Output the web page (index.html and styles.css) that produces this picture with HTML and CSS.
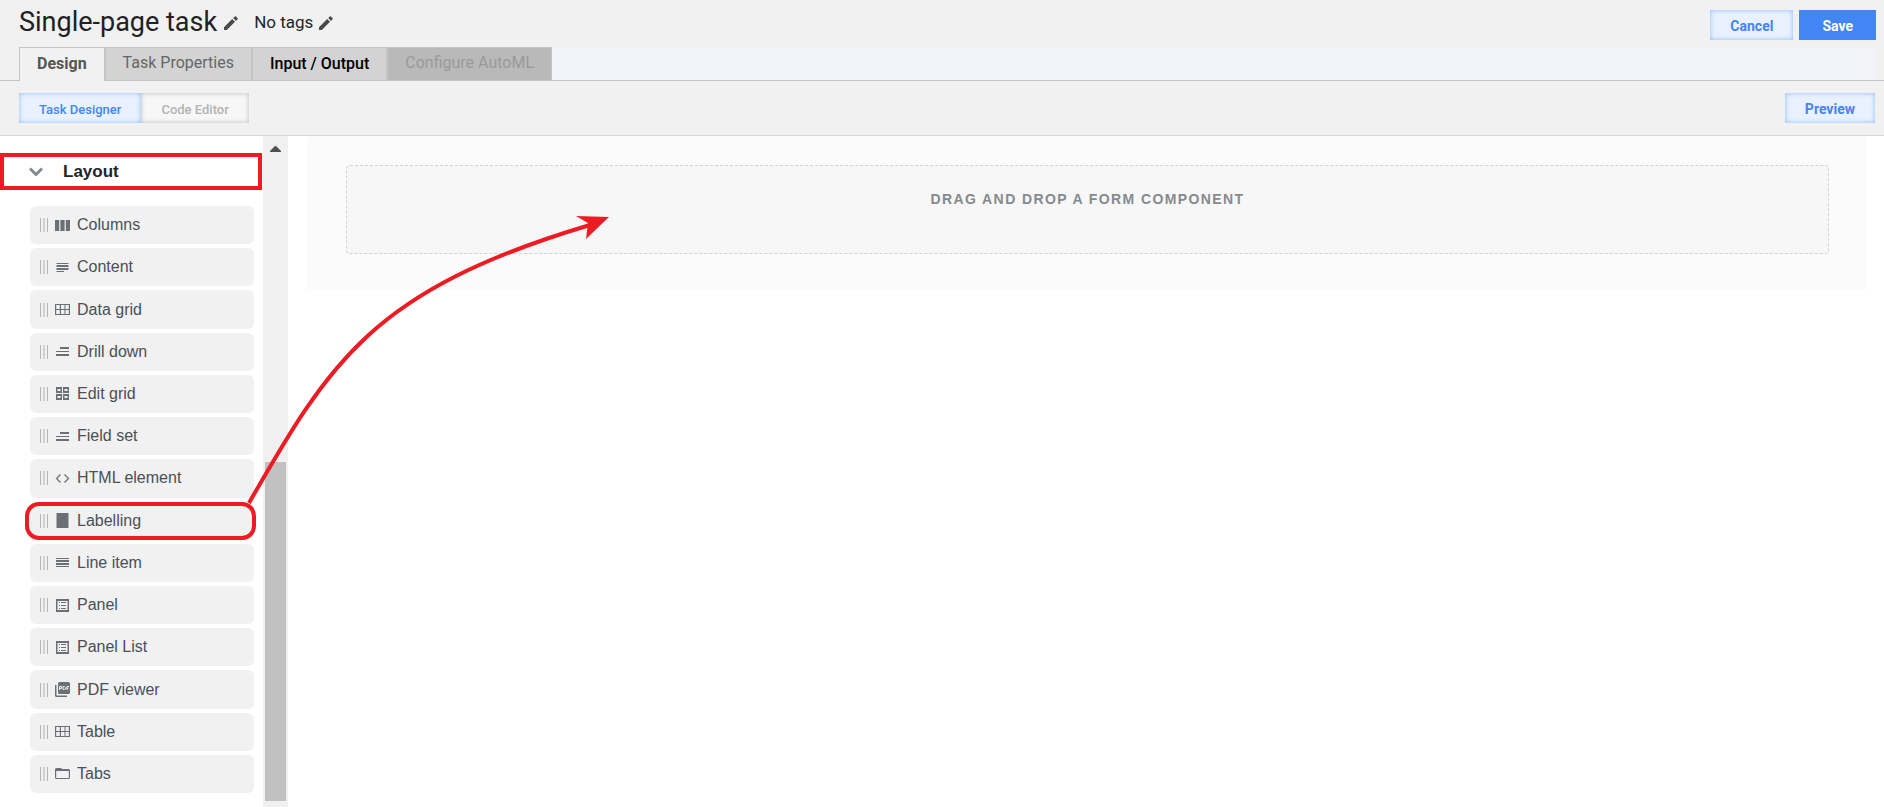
FILE: index.html
```
<!DOCTYPE html>
<html lang="en">
<head>
<meta charset="utf-8">
<title>Single-page task</title>
<link rel="stylesheet" href="styles.css">
</head>
<body>
<svg class="defs" aria-hidden="true">
  <symbol id="pencil" viewBox="0 0 14 14"><path d="M0 14V11.2L8.2 3l2.8 2.8L2.8 14zM9.2 2.1 10.8.5Q11.4 0 12 .5L13.5 2q.5.6 0 1.200L12 4.900z"/></symbol>
  <symbol id="handle" viewBox="0 0 8 14"><path class="thin" d="M0 0h1v14h-1zM7 0h1v14h-1z"/><path class="soft" d="M3 0h2v14h-2z"/></symbol>
  <symbol id="columns" viewBox="0 0 15 15"><path d="M0 2h4.200v11h-4.200zM5.400 2h4.200v11h-4.200zM10.800 2h4.200v11h-4.200z"/></symbol>
  <symbol id="content" viewBox="0 0 15 15"><path d="M1.500 3h12v1h-12zM1.500 5h12v2h-12zM1.500 8h12v2h-12zM1.500 11h7.500v1h-7.500z"/></symbol>
  <symbol id="grid" viewBox="0 0 15 15"><path fill-rule="evenodd" d="M0 2h15v11h-15zM1.200 3v4h3.600v-4zM6 3v4h3.500v-4zM10.500 3v4h3.300v-4zM1.200 8v4h3.600v-4zM6 8v4h3.500v-4zM10.500 8v4h3.300v-4z"/></symbol>
  <symbol id="drill" viewBox="0 0 15 15"><path d="M5 3h9v2h-9zM1 7h13v1h-13zM1 10h13v2h-13z"/></symbol>
  <symbol id="tiles" viewBox="0 0 15 15"><path fill-rule="evenodd" d="M1 1h6v6h-6zM2.500 3v2h3v-2zM8 1h6v6h-6zM9.500 3v2h3v-2zM1 8h6v6h-6zM2.500 10v2h3v-2zM8 8h6v6h-6zM9.500 10v2h3v-2z"/></symbol>
  <symbol id="code" viewBox="0 0 15 15"><path class="stroke" d="M5.500 3.500 1.500 7.500l4 4M9.500 3.500l4 4-4 4"/></symbol>
  <symbol id="block" viewBox="0 0 15 15"><path d="M1.500 0h12v15h-12z"/></symbol>
  <symbol id="lines" viewBox="0 0 15 15"><path d="M1 3h13v1h-13zM1 5h13v2h-13zM1 8h13v2h-13zM1 11h13v1h-13z"/></symbol>
  <symbol id="panel" viewBox="0 0 15 15"><path fill-rule="evenodd" d="M1 1h13v13h-13zM2.500 3v9h10v-9z"/><path d="M4 4h1v1h-1zM6 4h5v1h-5zM4 7h1v1h-1zM6 7h5v1h-5zM4 10h1v1h-1zM6 10h5v1h-5z"/></symbol>
  <symbol id="pdf" viewBox="0 0 15 15"><path d="M0 3h1.500v10.500h10.500v1.500h-10.500q-1.500 0-1.500-1.500z"/><rect x="3" width="12" height="12" rx="1.500"/><path class="cut" d="M4.500 8V4.500h2v2h-2M8 4.500h1.500l1 1v1.500l-1 .5h-1.500zM12 8V4.500h2M12 6.200h1.500"/></symbol>
  <symbol id="folder" viewBox="0 0 15 15"><path fill-rule="evenodd" d="M0 3.500q0-1.500 1.500-1.500h4.500l1.200 1h6.300q1.500 0 1.500 1.500v7q0 1.500-1.500 1.500h-12q-1.500 0-1.500-1.500zM1.200 5v7h12.600v-7z"/></symbol>
</svg>

<header class="header">
  <div class="title-row">
    <h1 class="title">Single-page task</h1>
    <button class="icon-button" aria-label="Edit title"><svg class="pencil"><use href="#pencil"/></svg></button>
    <span class="tags">No tags</span>
    <button class="icon-button" aria-label="Edit tags"><svg class="pencil"><use href="#pencil"/></svg></button>
    <div class="actions">
      <button class="btn btn-outline">Cancel</button>
      <button class="btn btn-primary">Save</button>
    </div>
  </div>
  <nav class="tabs">
    <div class="tabs-inner">
      <button class="tab tab-active">Design</button>
      <button class="tab">Task Properties</button>
      <button class="tab tab-strong">Input / Output</button>
      <button class="tab tab-disabled" disabled>Configure AutoML</button>
    </div>
  </nav>
  <div class="toolbar">
    <div class="switch">
      <button class="btn btn-small btn-outline">Task Designer</button>
      <button class="btn btn-small btn-muted">Code Editor</button>
    </div>
    <button class="btn btn-outline">Preview</button>
  </div>
</header>

<div class="workspace">
  <aside class="sidebar">
    <button class="group" aria-expanded="true">
      <svg class="chevron" viewBox="0 0 14 9"><path d="M1 1.500l6 6 6-6"/></svg>
      Layout
    </button>
    <ul class="components">
      <li><button class="item"><svg class="handle"><use href="#handle"/></svg><svg class="icon"><use href="#columns"/></svg>Columns</button></li>
      <li><button class="item"><svg class="handle"><use href="#handle"/></svg><svg class="icon"><use href="#content"/></svg>Content</button></li>
      <li><button class="item"><svg class="handle"><use href="#handle"/></svg><svg class="icon"><use href="#grid"/></svg>Data grid</button></li>
      <li><button class="item"><svg class="handle"><use href="#handle"/></svg><svg class="icon"><use href="#drill"/></svg>Drill down</button></li>
      <li><button class="item"><svg class="handle"><use href="#handle"/></svg><svg class="icon"><use href="#tiles"/></svg>Edit grid</button></li>
      <li><button class="item"><svg class="handle"><use href="#handle"/></svg><svg class="icon"><use href="#drill"/></svg>Field set</button></li>
      <li><button class="item"><svg class="handle"><use href="#handle"/></svg><svg class="icon"><use href="#code"/></svg>HTML element</button></li>
      <li><button class="item item-marked"><svg class="handle"><use href="#handle"/></svg><svg class="icon"><use href="#block"/></svg>Labelling</button></li>
      <li><button class="item"><svg class="handle"><use href="#handle"/></svg><svg class="icon"><use href="#lines"/></svg>Line item</button></li>
      <li><button class="item"><svg class="handle"><use href="#handle"/></svg><svg class="icon"><use href="#panel"/></svg>Panel</button></li>
      <li><button class="item"><svg class="handle"><use href="#handle"/></svg><svg class="icon"><use href="#panel"/></svg>Panel List</button></li>
      <li><button class="item"><svg class="handle"><use href="#handle"/></svg><svg class="icon"><use href="#pdf"/></svg>PDF viewer</button></li>
      <li><button class="item"><svg class="handle"><use href="#handle"/></svg><svg class="icon"><use href="#grid"/></svg>Table</button></li>
      <li><button class="item"><svg class="handle"><use href="#handle"/></svg><svg class="icon"><use href="#folder"/></svg>Tabs</button></li>
    </ul>
  </aside>
  <div class="scrollbar" aria-hidden="true">
    <svg class="scroll-arrow" viewBox="0 0 11 6"><path d="M0 6v-1l5-5h1l5 5v1z"/></svg>
    <div class="scroll-space"></div>
    <div class="scroll-thumb"></div>
  </div>
  <main class="canvas">
    <section class="form">
      <div class="dropzone">Drag and Drop a form component</div>
    </section>
  </main>
  <svg class="arrow" viewBox="0 0 370 296" aria-hidden="true">
    <path class="arrow-line" d="M9 293C90 152 132 80 350 15"/>
    <path class="arrow-head" d="M369 7 336 6 348 13 346 29z"/>
  </svg>
</div>
</body>
</html>
```
FILE: styles.css
```
* {
  box-sizing: border-box;
}

body {
  margin: 0;
  min-height: 100vh;
  display: flex;
  flex-direction: column;
  background: #fff;
  color: #212529;
  font-family: Roboto, "Liberation Sans", sans-serif;
}

button {
  margin: 0;
  padding: 0;
  border: 0;
  background: none;
  color: inherit;
  font: inherit;
}

.defs {
  display: none;
}

.header {
  background: #f1f1f1;
  border-bottom: 1px solid #d6d6d6;
}

.title-row {
  display: flex;
  align-items: center;
  height: 47px;
  padding: 0 8px 3px 19px;
}

.title {
  margin: 0;
  color: #212121;
  font-size: 27px;
  font-weight: 400;
  line-height: 32px;
}

.icon-button {
  display: flex;
  margin-left: 7px;
  padding-top: 2px;
}

.pencil {
  width: 14px;
  height: 14px;
  fill: #4a4a4a;
}

.icon-button + .tags {
  margin-left: 16px;
}

.tags {
  font-size: 17px;
  line-height: 24px;
}

.tags + .icon-button {
  margin-left: 6px;
}

.actions {
  display: flex;
  gap: 6px;
  margin-left: auto;
  padding-top: 6px;
}

.btn {
  height: 30px;
  padding: 2px 20px 0;
  font-size: 14px;
  font-weight: 700;
}

.btn-small {
  font-size: 13px;
  font-weight: 500;
}

.btn-outline {
  background: #eaf1fe;
  color: #4285f4;
  box-shadow: inset 0 0 5px #8ab8fb;
}

.btn-primary {
  padding: 2px 23px 0;
  background: #4285f4;
  color: #fff;
}

.btn-muted {
  background: #f7f7f7;
  color: #b3b3b3;
  box-shadow: inset 0 0 5px #bbb;
}

.tabs {
  padding: 0 8px 0 19px;
  border-bottom: 1px solid #c4c4c4;
}

.tabs-inner {
  display: flex;
  background: #f1f3f8;
}

.tab {
  height: 33px;
  padding: 0 17px 3px;
  border: 1px solid #c4c4c4;
  border-bottom: 0;
  background: #d3d3d3;
  color: #666;
  font-size: 16px;
}

.tab-active {
  height: 34px;
  margin-bottom: -1px;
  background: #f1f1f1;
  color: #555;
  font-weight: 700;
}

.tab-strong {
  padding-bottom: 1px;
  color: #000;
  font-weight: 500;
}

.tab-disabled {
  background: #b9b9b9;
  color: #999;
}

.toolbar {
  display: flex;
  justify-content: space-between;
  padding: 12px 9px 12px 19px;
}

.switch {
  display: flex;
}

.workspace {
  position: relative;
  flex: 1;
  display: flex;
  font-family: "Liberation Sans", Arial, sans-serif;
}

.sidebar {
  flex: none;
  display: flex;
  flex-direction: column;
  width: 263px;
  padding: 17px 1px 14px 0;
}

.group {
  display: flex;
  align-items: center;
  gap: 20px;
  height: 37px;
  padding: 0 25px;
  border: 4px solid #ed1c24;
  color: #212529;
  font-size: 17px;
  font-weight: 700;
}

.chevron {
  width: 14px;
  height: 9px;
  fill: none;
  stroke: #868a8e;
  stroke-width: 3;
}

.components {
  flex: 1;
  display: flex;
  flex-direction: column;
  gap: 4px;
  margin: 16px 8px 0 30px;
  padding: 0;
  list-style: none;
}

.components li {
  flex: 1;
  display: flex;
  min-height: 38px;
}

.item {
  position: relative;
  flex: 1;
  display: flex;
  align-items: center;
  gap: 7px;
  padding: 0 10px;
  border-radius: 6px;
  background: #f1f1f1;
  color: #495057;
  font-size: 16px;
}

.item-marked::after {
  content: "";
  position: absolute;
  inset: 0 -2px 0 -5px;
  border: 4px solid #ed1c24;
  border-radius: 14px;
}

.handle {
  width: 8px;
  height: 14px;
}

.thin {
  fill: #b4b6b5;
}

.soft {
  fill: #d0d2d1;
}

.icon {
  width: 15px;
  height: 15px;
  fill: #6c7075;
}

.stroke {
  fill: none;
  stroke: #6c7075;
  stroke-width: 1.3;
}

.cut {
  fill: none;
  stroke: #f1f1f1;
}

.scrollbar {
  flex: none;
  display: flex;
  flex-direction: column;
  width: 25px;
  padding: 10px 2px 6px;
  background: #f0f0f0;
}

.scroll-arrow {
  align-self: center;
  width: 11px;
  height: 6px;
  fill: #505050;
}

.scroll-space {
  flex: 11;
}

.scroll-thumb {
  flex: 12;
  background: #c1c1c1;
}

.canvas {
  flex: 1;
  padding: 0 17px 0 19px;
}

.form {
  padding: 29px 38px 36px 39px;
  border-radius: 4px;
  background: #fbfbfb;
}

.dropzone {
  height: 89px;
  padding-top: 23px;
  border: 1px dashed #d3d3d3;
  border-radius: 4px;
  background: #f7f7f7;
  color: #868a8e;
  font-size: 14px;
  font-weight: 700;
  line-height: 20px;
  letter-spacing: 0.1em;
  text-align: center;
  text-transform: uppercase;
}

.arrow {
  position: absolute;
  left: 240px;
  top: 74px;
  width: 370px;
  height: 296px;
  pointer-events: none;
}

.arrow-line {
  fill: none;
  stroke: #ed1c24;
  stroke-width: 4;
}

.arrow-head {
  fill: #ed1c24;
}
```
